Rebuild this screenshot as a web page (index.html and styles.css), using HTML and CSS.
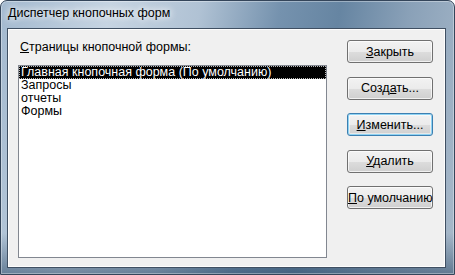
FILE: index.html
```html
<!DOCTYPE html>
<html lang="ru">
<head>
  <meta charset="UTF-8" />
  <title>Диспетчер кнопочных форм</title>
  <link rel="stylesheet" href="styles.css">
</head>
<body>
  <div class="window" role="dialog" aria-label="Диспетчер кнопочных форм">
    <div class="title">Диспетчер кнопочных форм</div>
    <div class="client">
      <div class="pages">
        <label class="caption" for="pageList"><u>С</u>траницы кнопочной формы:</label>
        <ul class="list" id="pageList">
          <li class="selected">Главная кнопочная форма (По умолчанию)</li>
          <li>Запросы</li>
          <li>отчеты</li>
          <li>Формы</li>
        </ul>
      </div>
      <div class="buttons">
        <button type="button"><u>З</u>акрыть</button>
        <button type="button">Созд<u>а</u>ть...</button>
        <button type="button" class="default"><u>И</u>зменить...</button>
        <button type="button"><u>У</u>далить</button>
        <button type="button"><u>П</u>о умолчанию</button>
      </div>
    </div>
  </div>
</body>
</html>
```

FILE: styles.css
```css
* {
  box-sizing: border-box;
}

body {
  margin: 0;
  width: 455px;
  height: 275px;
  overflow: hidden;
  font-family: "Liberation Sans", Arial, sans-serif;
  font-size: 12.5px;
  color: #000;
}

.window {
  width: 455px;
  height: 275px;
  display: flex;
  flex-direction: column;
  border: 1px solid #34455a;
  border-radius: 7px 7px 0 0;
  background:
    linear-gradient(to bottom, rgba(255, 255, 255, 0) 85%, rgba(40, 70, 100, 0.55) 100%),
    linear-gradient(100deg, #a3b9cf 0%, #c6d4e2 22%, #b0c2d4 40%, #7592ae 56%, #6685a2 68%, #8aa1b8 82%, #a9bacb 100%);
  box-shadow: inset 0 0 0 1px rgba(255, 255, 255, 0.35);
}

.title {
  height: 27px;
  padding: 5px 0 0 7px;
  line-height: 15px;
  text-shadow: 0 0 6px #fff, 0 0 10px rgba(255, 255, 255, 0.8);
}

.client {
  flex: 1;
  margin: 0 8px 6px 6px;
  display: flex;
  gap: 20px;
  padding: 11px 11px 9px 10px;
  background: #f0f0f0;
  border: 1px solid #3f4f62;
  box-shadow: inset 0 0 0 1px #fdfdfd;
}

.pages {
  width: 309px;
  display: flex;
  flex-direction: column;
  gap: 10px;
}

.caption {
  margin-left: 2px;
  line-height: 15px;
}

.list {
  flex: 1;
  margin: 0;
  padding: 0;
  list-style: none;
  background: #fff;
  border: 1px solid #828790;
}

.list li {
  height: 13px;
  padding-left: 2px;
  line-height: 13px;
  white-space: nowrap;
}

.list li.selected {
  background: #000;
  color: #fff;
  outline: 1px dotted #b8b8b8;
  outline-offset: -1px;
}

.buttons {
  display: flex;
  flex-direction: column;
  gap: 13.5px;
}

button {
  width: 86px;
  height: 23px;
  padding: 0;
  font-family: inherit;
  font-size: 12.5px;
  white-space: nowrap;
  color: #000;
  border: 1px solid #707070;
  border-radius: 3px;
  background: linear-gradient(to bottom, #f2f2f2 0%, #ebebeb 50%, #dddddd 50%, #cfcfcf 100%);
  box-shadow: inset 0 0 0 1px rgba(255, 255, 255, 0.7);
}

button.default {
  border-color: #3c7fb1;
  box-shadow: inset 0 0 0 1px #8fd3f3, inset 0 0 0 2px rgba(255, 255, 255, 0.5);
}
```
